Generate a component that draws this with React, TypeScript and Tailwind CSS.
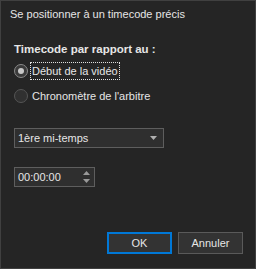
import React, { useState } from 'react';

const font = { fontFamily: '"Liberation Sans", Arial, sans-serif' };

const Radio = ({ checked, label, focused, onClick }: { checked: boolean; label: string; focused?: boolean; onClick: () => void }) => (
  <div className="flex h-[20px] items-center cursor-default" onClick={onClick}>
    <div
      className={`flex h-[14px] w-[14px] items-center justify-center rounded-full border ${
        checked ? 'border-[#8a8a8a] bg-[#3a3a3a]' : 'border-[#555555] bg-[#303030]'
      }`}
    >
      {checked && <div className="h-[6px] w-[6px] rounded-full bg-[#c8c8c8]" />}
    </div>
    <span
      className={`ml-[3px] px-[1px] leading-[16px] ${focused ? 'outline outline-1 outline-dotted outline-[#e0e0e0]' : ''}`}
    >
      {label}
    </span>
  </div>
);

const App = () => {
  const [ref, setRef] = useState(0);

  return (
    <div
      className="flex h-[269px] w-[256px] flex-col border border-[#404040] bg-[#252525] text-[11px] text-[#e6e6e6]"
      style={font}
    >
      {/* Title */}
      <div className="mt-[5px] pl-[9px] leading-[16px]">Se positionner à un timecode précis</div>

      <div className="mt-[19px] flex flex-col pl-[13px]">
        <div className="text-[11.5px] font-bold leading-[16px]">Timecode par rapport au :</div>

        <div className="mt-[4px] flex flex-col gap-[5px]">
          <Radio checked={ref === 0} focused label="Début de la vidéo" onClick={() => setRef(0)} />
          <Radio checked={ref === 1} label="Chronomètre de l'arbitre" onClick={() => setRef(1)} />
        </div>

        {/* Half select */}
        <div className="mt-[22px] flex h-[20px] w-[150px] items-center justify-between border border-[#5e5e5e] bg-[#2f2f2f] pl-[3px] pr-[6px]">
          <span className="leading-[16px]">1ère mi-temps</span>
          <svg width="7" height="4" viewBox="0 0 7 4">
            <path d="M0 0h7L3.5 4z" fill="#b0b0b0" />
          </svg>
        </div>

        {/* Time input */}
        <div className="mt-[19px] flex h-[20px] w-[81px] items-center justify-between border border-[#5e5e5e] bg-[#2f2f2f] pl-[3px] pr-[4px]">
          <span className="leading-[16px]">00:00:00</span>
          <div className="flex flex-col gap-[4px]">
            <svg width="7" height="4" viewBox="0 0 7 4">
              <path d="M3.5 0L7 4H0z" fill="#9a9a9a" />
            </svg>
            <svg width="7" height="4" viewBox="0 0 7 4">
              <path d="M0 0h7L3.5 4z" fill="#9a9a9a" />
            </svg>
          </div>
        </div>
      </div>

      {/* Buttons */}
      <div className="mt-auto mb-[14px] flex justify-end gap-[6px] pr-[12px]">
        <button className="h-[22px] w-[65px] border-2 border-[#0078d7] bg-[#333333] text-[#e6e6e6]">OK</button>
        <button className="h-[22px] w-[65px] border border-[#5a5a5a] bg-[#333333] text-[#e6e6e6]">Annuler</button>
      </div>
    </div>
  );
};

export default App;
